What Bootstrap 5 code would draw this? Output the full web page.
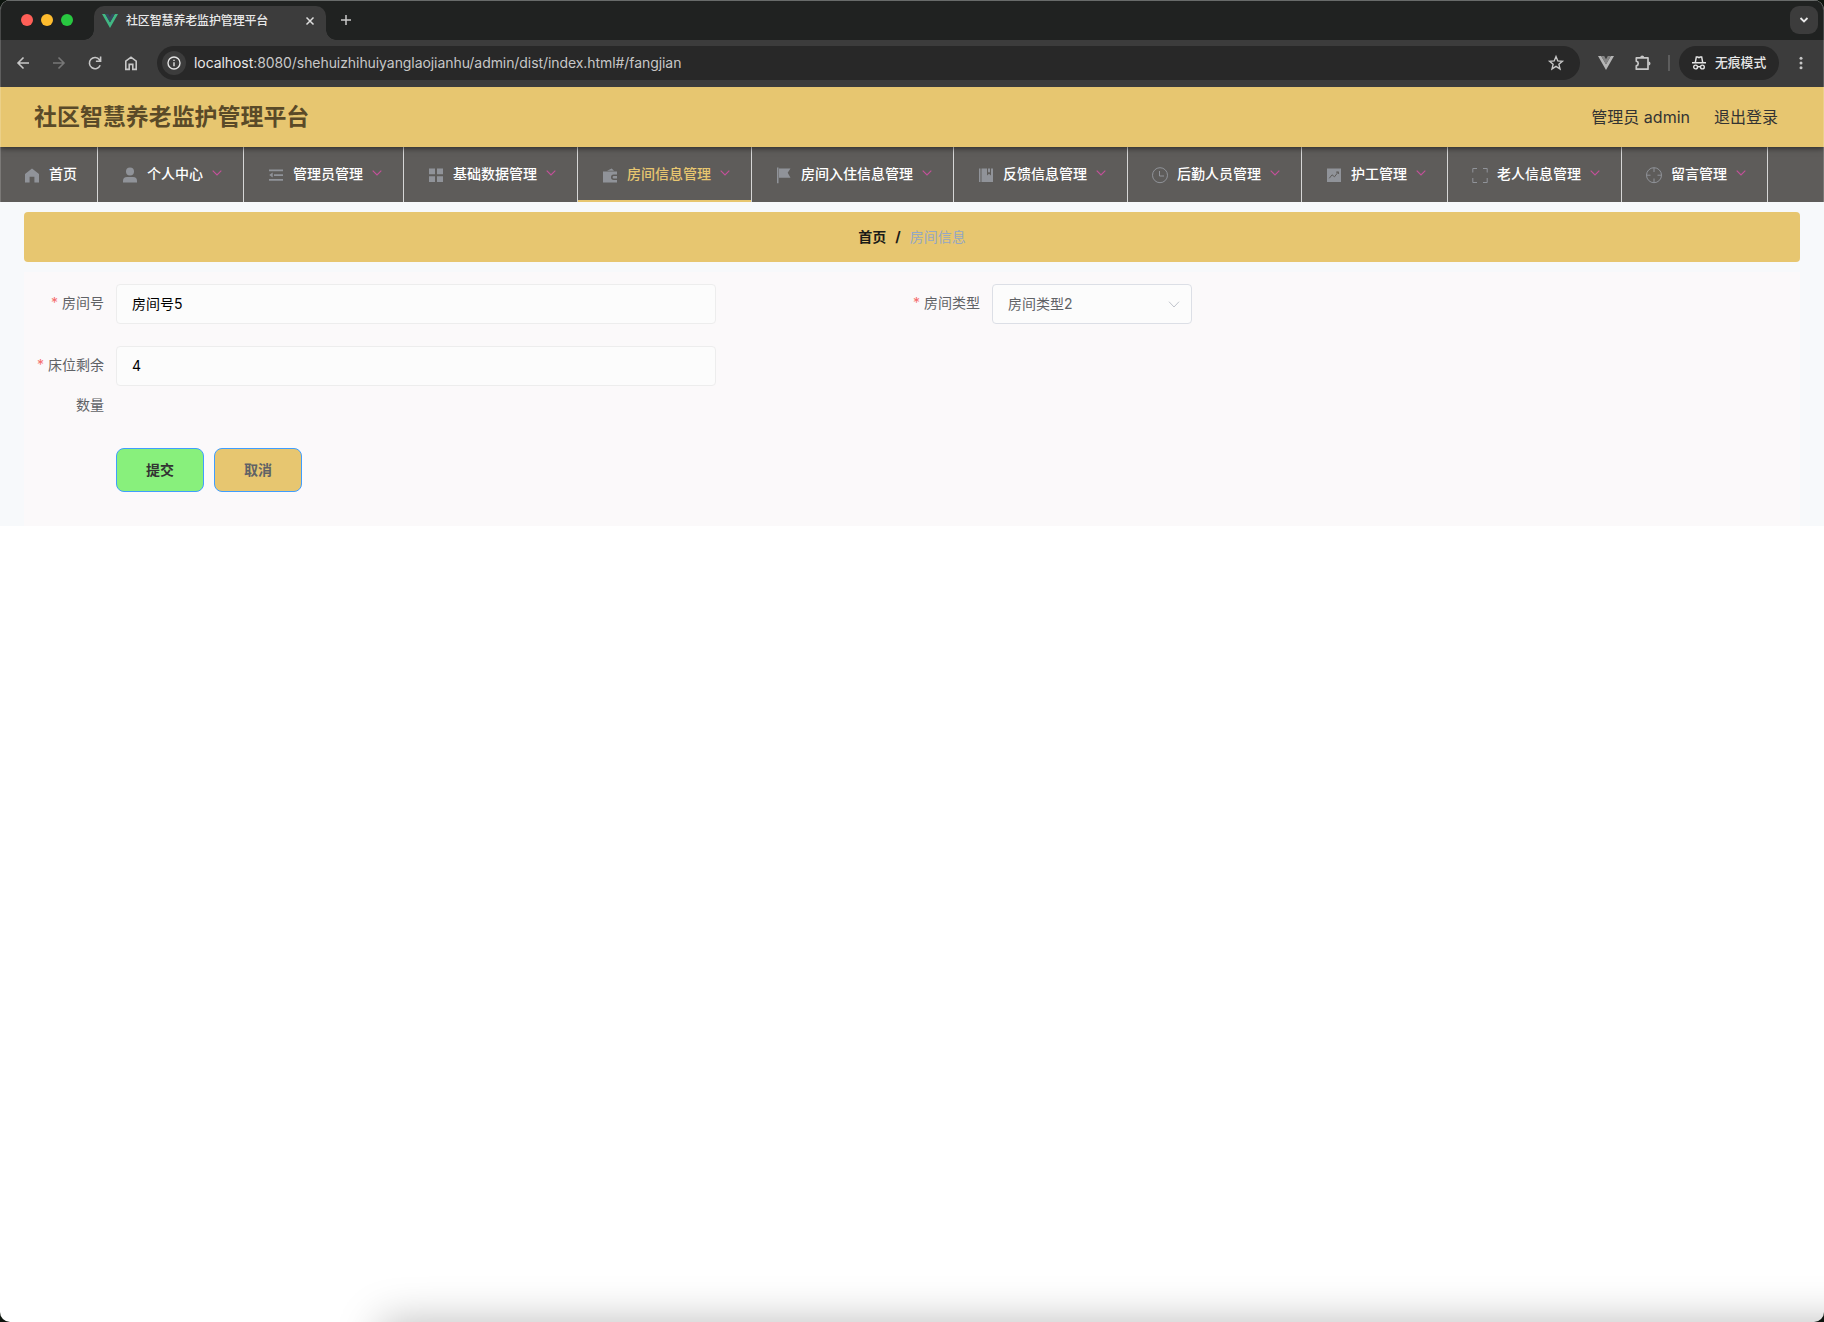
<!DOCTYPE html>
<html lang="zh-CN">
<head>
<meta charset="utf-8">
<title>社区智慧养老监护管理平台</title>
<link href="https://cdn.jsdelivr.net/npm/bootstrap@5.3.0/dist/css/bootstrap.min.css" rel="stylesheet">
<style>
html{background:#0d140e}
body{font-family:Inter,"Noto Sans CJK SC",sans-serif;font-size:14px;line-height:20px;background:#0d140e;width:1824px;height:1322px;overflow:hidden}
svg{display:block;flex:none}
.win{height:1322px;border-radius:10px;overflow:hidden;background:#fff}
.tabstrip{height:40px;background:#202221;border-top:1px solid #686b6a;padding:5px 6px 0 21px}
.dots{padding-bottom:6px}
.dot{width:12px;height:12px;border-radius:50%;margin-right:8px}
.btab{width:232px;height:34px;background:#3c3c3c;border-radius:10px 10px 0 0;color:#e9e9e9;font-size:12px;padding:0 11px 4px 8px;margin-left:21px;position:relative}
.btab:before,.btab:after{content:"";position:absolute;bottom:0;width:10px;height:10px}
.btab:before{left:-10px;background:radial-gradient(circle at 0 0,#202221 9.5px,#3c3c3c 10px)}
.btab:after{right:-10px;background:radial-gradient(circle at 100% 0,#202221 9.5px,#3c3c3c 10px)}
.btab .ttl{letter-spacing:-.15px;font-weight:500;margin:-1px 0 0 8px}
.drop{width:28px;height:28px;border-radius:9px;background:#3c3c3c;margin-bottom:6px}
.toolbar{height:47px;background:#3c3c3c;padding:0 14px 1px 14px;color:#c7c7c7;position:relative;z-index:2}
.url{height:34px;border-radius:17px;background:#282828;margin-left:17px;width:1423px;padding:0 15px 0 5px}
.info{width:24px;height:24px;border-radius:50%;background:#3c3c3c}
.addr{font-size:14px;color:#c7c7c7;margin-left:8px;white-space:nowrap;letter-spacing:-.07px}
.addr b{font-weight:400;color:#e9e9e9}
.incog{height:34px;width:100px;border-radius:17px;background:#282828;color:#e6e6e6;font-size:12.8px;font-weight:500}
.vsep{width:2px;height:16px;background:#5d5d5d}
.apphead{height:60px;background:#e7c670;padding:0 46px 0 34px;box-shadow:0 1px 6px rgba(0,0,0,.6);position:relative;font-size:16px;color:#333}
.apphead h1{font-size:22.95px;font-weight:700;color:#5a4a28;line-height:30px}
.mainnav{height:55px;background:#5e5c5a}
.mi{height:55px;border-right:1px solid #d6d6d6;padding:0 20px;color:#fff;font-weight:500;white-space:nowrap;flex:none}
.mi span{margin-top:-1px}
.mi .ic{width:24px;height:24px;color:#909399;margin-right:5px}
.mi .ar{width:12px;margin-left:8px;margin-top:-3px;color:#c4509a}
.mi.on{color:#e7c670;box-shadow:inset 0 -2px #e7c670}
.page{height:324px;background:#f7f9fb;padding:10px 24px 0}
.crumb{height:50px;background:#e7c670;border-radius:4px;margin-bottom:10px;color:#1b1b18;font-weight:700;padding-bottom:1px}
.crumb .cur{color:#93a7c4;font-weight:400}
.crumb .sl{margin:0 9px}
.panel{height:254px;background:#fbf9fa;padding:12px}
.lb{width:80px;padding-right:12px;margin-top:-1px;text-align:right;line-height:40px;color:#606266;flex:none}
.lb i{color:#f56c6c;font-style:normal;margin-right:4px}
.inp{width:600px;height:40px;border:1px solid #ededed;border-radius:4px;background:#fcfcfc;padding:0 15px 2px;color:#000;font-size:14px}
.sel{width:200px;height:40px;border:1px solid #dcdfe6;border-radius:4px;background:#fcfcfc;padding:0 11px 0 15px;color:#606266}
.sel span{margin-top:-1px}
.bt{width:88px;height:44px;border:1px solid #409eff;border-radius:8px;font-size:14px;font-weight:600;padding:0 0 2px}
.bt.ok{background:#88f07c;color:#333;margin-right:10px}
.bt.no{background:#e7c670;color:#606266}
.shade{position:absolute;left:385px;top:1326px;width:1700px;height:60px;box-shadow:0 0 44px 4px rgba(0,0,0,.27)}
.edge{position:absolute;left:0;top:0;width:1824px;height:202px;border:1px solid rgba(255,255,255,.18);border-top:0;border-bottom:0;border-radius:10px 10px 0 0;z-index:3}
</style>
<script src="https://cdn.jsdelivr.net/npm/bootstrap@5.3.0/dist/js/bootstrap.bundle.min.js"></script>
</head>
<body>
<svg width="0" height="0" class="position-absolute"><defs>
<symbol id="ar" viewBox="0 0 12 12"><path d="M1.700 3.700 6 8 10.300 3.700" fill="none" stroke="currentColor" stroke-width="1.150"/></symbol>
</defs></svg>
<div class="win position-relative">
  <div class="tabstrip d-flex align-items-center">
    <div class="dots d-flex align-items-center">
      <span class="dot" style="background:#ff5f57"></span><span class="dot" style="background:#febc2e"></span><span class="dot me-0" style="background:#28c840"></span>
    </div>
    <div class="btab d-flex align-items-center">
      <svg width="16" height="14" viewBox="0 0 16 14"><path d="M0 0h3.2L8 8.3 12.8 0H16L8 14z" fill="#41b883"/><path d="M3.2 0h3L8 3.2 9.8 0h3L8 8.4z" fill="#35495e"/></svg>
      <span class="ttl">社区智慧养老监护管理平台</span>
      <svg class="ms-auto" width="10" height="10" viewBox="0 0 10 10" stroke="#dedede" stroke-width="1.5"><path d="M1.5 1.5l7 7M8.5 1.5l-7 7"/></svg>
    </div>
    <svg style="margin:0 0 6px 14px" width="12" height="12" viewBox="0 0 12 12" stroke="#c9c9c9" stroke-width="1.5"><path d="M6 1v10M1 6h10"/></svg>
    <div class="drop ms-auto d-flex align-items-center justify-content-center"><svg width="10" height="10" viewBox="0 0 10 10" fill="none" stroke="#e8e8e8" stroke-width="1.8"><path d="M1.5 3 5 6.5 8.500 3"/></svg></div>
  </div>
  <div class="toolbar d-flex align-items-center">
    <svg width="18" height="18" viewBox="0 0 18 18" fill="none" stroke="currentColor" stroke-width="1.6"><path d="M15 9H4M9.500 3.500 4 9l5.500 5.500"/></svg>
    <svg style="margin-left:18px" width="18" height="18" viewBox="0 0 18 18" fill="none" stroke="#777" stroke-width="1.600"><path d="M3 9h11M8.500 3.500 14 9l-5.500 5.500"/></svg>
    <svg style="margin-left:18px" width="18" height="18" viewBox="0 0 18 18" fill="none" stroke="currentColor" stroke-width="1.6"><path d="M14.200 11.200A5.600 5.600 0 1 1 13.500 5.700L14.500 7M14.600 2.500V7.200H9.900"/></svg>
    <svg style="margin-left:18px" width="18" height="18" viewBox="0 0 18 18" fill="none" stroke="currentColor" stroke-width="1.6"><path d="M3.800 7.200 9 3.200l5.200 4v8.200h-3.400v-5H7.200v5H3.800z"/></svg>
    <div class="url d-flex align-items-center">
      <div class="info d-flex align-items-center justify-content-center"><svg width="14" height="14" viewBox="0 0 14 14" fill="none" stroke="#e3e3e3"><circle cx="7" cy="7" r="6" stroke-width="1.400"/><path d="M7 6.200v4M7 3.700v1.400" stroke-width="1.400"/></svg></div>
      <span class="addr"><b>localhost</b>:8080/shehuizhihuiyanglaojianhu/admin/dist/index.html#/fangjian</span>
      <svg class="ms-auto" width="18" height="18" viewBox="0 0 18 18" fill="none" stroke="currentColor" stroke-width="1.400"><path d="M9 2.600l1.800 4.300 4.600.4-3.500 3 1.100 4.600L9 12.400l-4 2.500 1.100-4.600-3.500-3 4.600-.4z"/></svg>
    </div>
    <svg style="margin-left:18px" width="16" height="14" viewBox="0 0 16 14"><path d="M0 0h3.200L8 8.300 12.800 0H16L8 14z" fill="#b5b5b5"/><path d="M3.200 0h3L8 3.200 9.800 0h3L8 8.400z" fill="#858585"/></svg>
    <svg style="margin-left:20px" width="18" height="18" viewBox="0 0 18 18"><path d="M2.300 3.900H14V15.200H2.300V11.900A2.400 2.400 0 0 0 2.300 7.200z" fill="none" stroke="currentColor" stroke-width="1.700" stroke-linejoin="round"/><path d="M6.200 3.500a2 2 0 0 1 4 0zM14.500 7.600a2 2 0 0 1 0 4z" fill="currentColor"/></svg>
    <span class="vsep" style="margin-left:16px"></span>
    <div class="incog d-flex align-items-center" style="margin-left:9px;padding-left:13px">
      <svg width="14" height="14" viewBox="0 0 14 14" fill="none" stroke="#e6e6e6" stroke-width="1.400"><path d="M0 6.800h14M3.300 6.500 4.300 1h1.500l1.200.6L8.200 1h1.500l1 5.500"/><circle cx="3.600" cy="11" r="1.900"/><circle cx="10.400" cy="11" r="1.900"/><path d="M5.500 10.700h3"/></svg>
      <span style="margin-left:9px">无痕模式</span>
    </div>
    <svg class="ms-auto" style="margin-right:6px" width="6" height="14" viewBox="0 0 6 14" fill="currentColor"><circle cx="3" cy="2.300" r="1.500"/><circle cx="3" cy="7" r="1.500"/><circle cx="3" cy="11.700" r="1.500"/></svg>
  </div>

  <header class="apphead d-flex align-items-center justify-content-between">
    <h1 class="m-0">社区智慧养老监护管理平台</h1>
    <div class="d-flex"><span style="margin-right:24px">管理员 admin</span><span>退出登录</span></div>
  </header>

  <nav class="mainnav d-flex">
    <div class="mi d-flex align-items-center"><svg class="ic" viewBox="0 0 24 24" fill="currentColor"><path d="M12 5.500 19 11v8.500h-4.600v-5.700H9.600v5.700H5V11z"/></svg><span>首页</span></div>
    <div class="mi d-flex align-items-center"><svg class="ic" viewBox="0 0 24 24" fill="currentColor"><circle cx="12" cy="8.500" r="4"/><path d="M5 19.500V18a4 4 0 0 1 4-4h6a4 4 0 0 1 4 4v1.500z"/></svg><span>个人中心</span><svg class="ar" height="12"><use href="#ar"/></svg></div>
    <div class="mi d-flex align-items-center"><svg class="ic" viewBox="0 0 24 24" fill="currentColor"><path d="M5 6.500h14v1.700H5zM10 11.200h9v1.700h-9zM5 16h14v1.700H5zM8.700 9.500v5L5.200 12z"/></svg><span>管理员管理</span><svg class="ar" height="12"><use href="#ar"/></svg></div>
    <div class="mi d-flex align-items-center"><svg class="ic" viewBox="0 0 24 24" fill="currentColor"><path d="M5 5.500h6v5.700H5zM13 5.500h6v5.700h-6zM5 13.300h6V19H5zM13 13.300h6V19h-6z"/></svg><span>基础数据管理</span><svg class="ar" height="12"><use href="#ar"/></svg></div>
    <div class="mi on d-flex align-items-center"><svg class="ic" viewBox="0 0 24 24" fill="currentColor"><path d="M5 8.500h14v3h-3.300a2.700 2.700 0 0 0 0 5.400H19v2.600H5z"/><path d="M9 7.800 13.700 5.500l2.300 2.300zM15.800 13H19v2.400h-3.200a1.200 1.200 0 0 1 0-2.400z"/></svg><span>房间信息管理</span><svg class="ar" height="12"><use href="#ar"/></svg></div>
    <div class="mi d-flex align-items-center"><svg class="ic" viewBox="0 0 24 24" fill="currentColor"><path d="M5 4.500h1.500v15.700H5zM7 5.500h11.500l-2.800 4.300 2.800 5H7z"/></svg><span>房间入住信息管理</span><svg class="ar" height="12"><use href="#ar"/></svg></div>
    <div class="mi d-flex align-items-center"><svg class="ic" viewBox="0 0 24 24" fill="currentColor"><path d="M5 5.500h1.500V19H5zM7.500 5.500H13v7l2-1.800 2 1.800v-7h2V19H7.500zM14 5.500h2v4.200l-1-1-1 1z"/></svg><span>反馈信息管理</span><svg class="ar" height="12"><use href="#ar"/></svg></div>
    <div class="mi d-flex align-items-center"><svg class="ic" viewBox="0 0 24 24" fill="none" stroke="currentColor"><circle cx="12" cy="12.200" r="7.500"/><path d="M11.500 8v5h4.500"/></svg><span>后勤人员管理</span><svg class="ar" height="12"><use href="#ar"/></svg></div>
    <div class="mi d-flex align-items-center"><svg class="ic" viewBox="0 0 24 24"><path d="M5 5.500h14V19H5z" fill="currentColor"/><path d="M7.300 15.300l2.700-3.500 2.500 2 3.700-4.800M14 9.200l2.400-.4.200 2.200" fill="none" stroke="#5e5c5a"/></svg><span>护工管理</span><svg class="ar" height="12"><use href="#ar"/></svg></div>
    <div class="mi d-flex align-items-center"><svg class="ic" viewBox="0 0 24 24" fill="none" stroke="currentColor"><path d="M4.800 9.500V5.500h4.200M15 5.500h4.200v4M19.200 15v4.500H15M9 19.500H4.800V15"/></svg><span>老人信息管理</span><svg class="ar" height="12"><use href="#ar"/></svg></div>
    <div class="mi d-flex align-items-center"><svg class="ic" viewBox="0 0 24 24" fill="none" stroke="currentColor"><circle cx="12" cy="12.200" r="7.500"/><path d="M12 5v4M12 15.500v4M4.500 12.200h4M15.500 12.200h4"/></svg><span>留言管理</span><svg class="ar" height="12"><use href="#ar"/></svg></div>
  </nav>

  <main class="page">
    <div class="crumb d-flex align-items-center justify-content-center">
      <span>首页</span><span class="sl">/</span><span class="cur">房间信息</span>
    </div>
    <form class="panel">
      <div class="row g-0">
        <div class="col-6 d-flex" style="height:62px"><label class="lb"><i>*</i>房间号</label><input class="inp" value="房间号5"></div>
        <div class="col-6 d-flex"><label class="lb text-nowrap"><i>*</i>房间类型</label>
          <div class="sel d-flex align-items-center justify-content-between"><span>房间类型2</span><svg width="12" height="12" viewBox="0 0 12 12" fill="none" stroke="#c0c4cc"><path d="M1 3.700 6 9l5-5.300"/></svg></div></div>
        <div class="col-12 d-flex" style="height:102px"><label class="lb"><i>*</i>床位剩余数量</label><input class="inp" value="4"></div>
        <div class="col-12 d-flex" style="padding-left:80px"><button type="button" class="btn bt ok">提交</button><button type="button" class="btn bt no">取消</button></div>
      </div>
    </form>
  </main>
  <div class="shade"></div>
  <div class="edge"></div>
</div>
</body>
</html>
